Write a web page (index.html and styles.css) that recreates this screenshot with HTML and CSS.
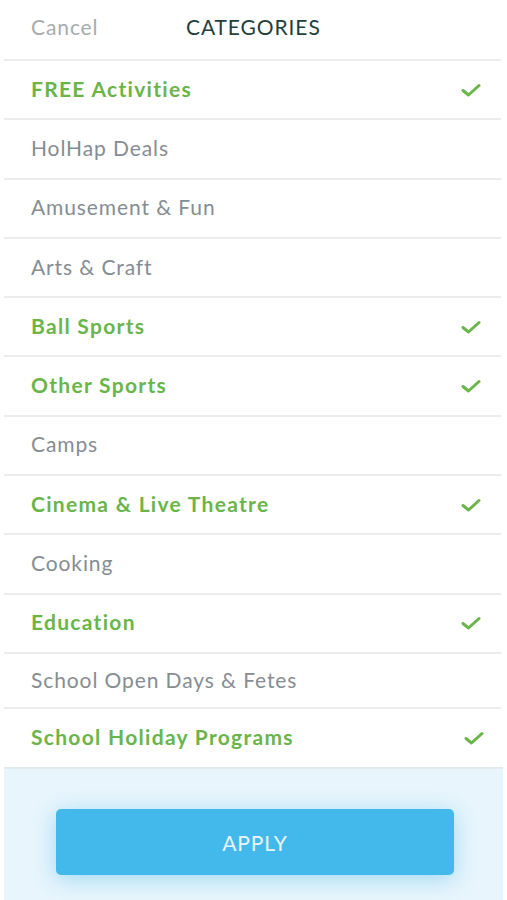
FILE: index.html
```html
<!DOCTYPE html>
<html>
<head>
<meta charset="utf-8">
<link rel="stylesheet" href="styles.css">
</head>
<body>
<div class="sheet">
  <header class="header">
    <span class="cancel">Cancel</span>
    <span class="title">CATEGORIES</span>
  </header>
  <ul class="list">
    <li class="row on"><span>FREE Activities</span><svg class="check" viewBox="0 0 20 14"><path d="M2 7.5 L7.5 12 L18 2.5"/></svg></li>
    <li class="row"><span>HolHap Deals</span></li>
    <li class="row"><span>Amusement &amp; Fun</span></li>
    <li class="row"><span>Arts &amp; Craft</span></li>
    <li class="row on"><span>Ball Sports</span><svg class="check" viewBox="0 0 20 14"><path d="M2 7.5 L7.5 12 L18 2.5"/></svg></li>
    <li class="row on"><span>Other Sports</span><svg class="check" viewBox="0 0 20 14"><path d="M2 7.5 L7.5 12 L18 2.5"/></svg></li>
    <li class="row"><span>Camps</span></li>
    <li class="row on"><span>Cinema &amp; Live Theatre</span><svg class="check" viewBox="0 0 20 14"><path d="M2 7.5 L7.5 12 L18 2.5"/></svg></li>
    <li class="row"><span>Cooking</span></li>
    <li class="row on"><span>Education</span><svg class="check" viewBox="0 0 20 14"><path d="M2 7.5 L7.5 12 L18 2.5"/></svg></li>
    <li class="row short"><span>School Open Days &amp; Fetes</span></li>
    <li class="row on tall"><span>School Holiday Programs</span><svg class="check" viewBox="0 0 20 14"><path d="M2 7.5 L7.5 12 L18 2.5"/></svg></li>
  </ul>
  <footer class="footer">
    <button class="apply">APPLY</button>
  </footer>
</div>
</body>
</html>
```
FILE: styles.css
```css
* { box-sizing: border-box; }
html, body { margin: 0; padding: 0; background: #ffffff; }
body {
  font-family: "Lato", "Open Sans", sans-serif;
  width: 507px;
  height: 900px;
  overflow: hidden;
}
.sheet {
  margin: 0 6px 0 4px;
  display: flex;
  flex-direction: column;
  height: 900px;
}
.header {
  height: 59px;
  display: flex;
  align-items: center;
  padding: 0 0 6px 27px;
  font-size: 21px;
  letter-spacing: 0.9px;
}
.cancel {
  color: #a9abac;
  width: 155px;
}
.title {
  color: #1f3f3b;
}
.list {
  list-style: none;
  margin: 0;
  padding: 0;
}
.row {
  height: 59.3px;
  border-top: 2px solid #ececec;
  display: flex;
  align-items: center;
  justify-content: space-between;
  padding: 0 20px 3px 27px;
  font-size: 21px;
  color: #858d92;
  letter-spacing: 0.9px;
}
.row.short { height: 55.5px; }
.row.tall { height: 60px; padding-right: 17px; }
.row.on {
  color: #6ab54a;
  font-weight: 700;
  letter-spacing: 1.3px;
}
.check {
  width: 20px;
  height: 14px;
  fill: none;
  stroke: #6ab54a;
  stroke-width: 3;
  stroke-linecap: round;
  stroke-linejoin: round;
  margin-top: 3px;
}
.footer {
  flex: 1;
  background: #e8f5fc;
  border-top: 2px solid #e3eaee;
  padding: 40px 46px 0 52px;
  margin-right: -2px;
}
.apply {
  display: block;
  width: 398px;
  height: 66px;
  border: none;
  border-radius: 5px;
  background: #42b9ea;
  color: #e8f6fd;
  font-family: "Lato", "Open Sans", sans-serif;
  font-size: 21px;
  letter-spacing: 0.8px;
  box-shadow: 0 4px 22px rgba(66, 185, 234, 0.45);
}
```
